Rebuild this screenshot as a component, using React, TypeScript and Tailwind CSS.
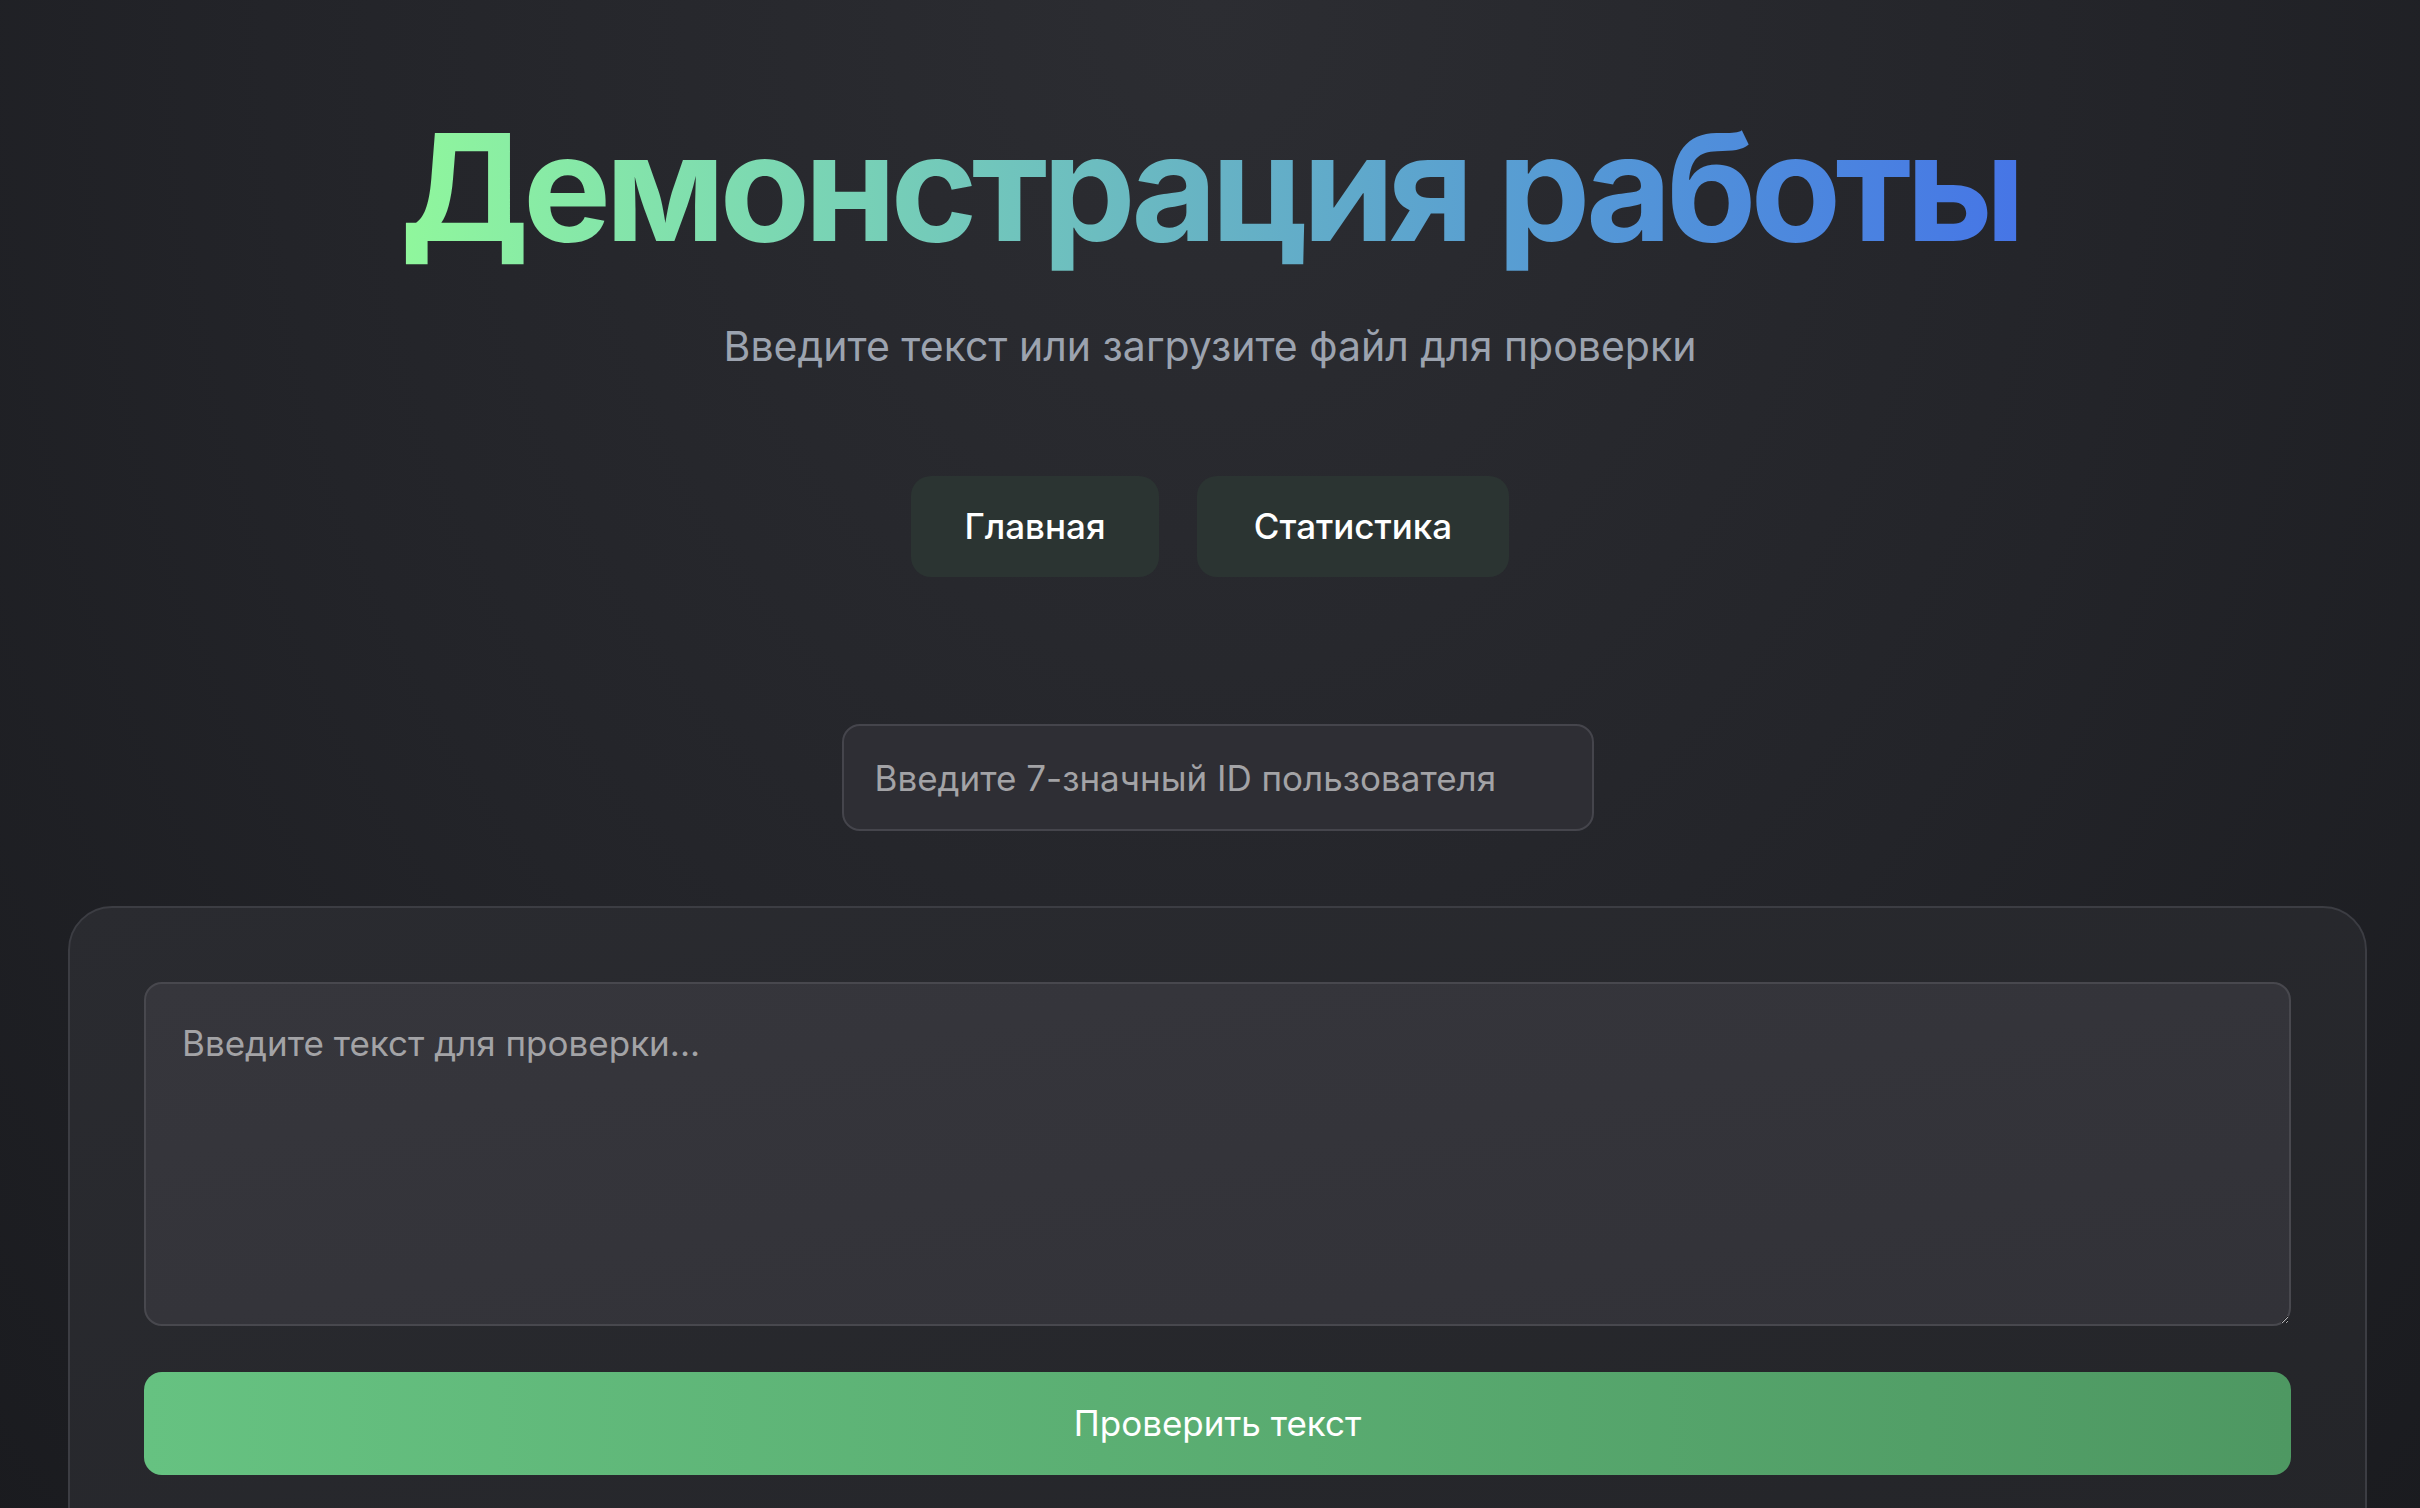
export default function App() {
  return (
    <div className="min-h-screen bg-[radial-gradient(ellipse_at_top,#2c2d32_0%,#232429_55%,#1a1b1f_100%)] font-['Inter',sans-serif] text-white">
      <header className="flex flex-col items-center pt-[114px]">
        <h1 className="bg-gradient-to-r from-[#90f79c] via-[#67b3c4] to-[#4675e6] bg-clip-text pb-[24px] text-[148px] font-bold leading-none tracking-[-0.04em] text-transparent">
          Демонстрация работы
        </h1>
        <p className="mt-[38px] text-[41px] leading-[44px] text-[#9ca3af]">
          Введите текст или загрузите файл для проверки
        </p>
        <nav className="mt-[108px] flex gap-[38px]">
          <button className="h-[101px] w-[248px] rounded-[20px] bg-[#2b3432] text-[35px] font-medium">
            Главная
          </button>
          <button className="h-[101px] w-[312px] rounded-[20px] bg-[#2b3432] text-[35px] font-medium">
            Статистика
          </button>
        </nav>
      </header>

      <main className="ml-[68px] mt-[147px] flex w-[2299px] flex-col items-center">
        <input
          type="text"
          placeholder="Введите 7-значный ID пользователя"
          className="h-[107px] w-[752px] rounded-[18px] border-2 border-[#45454c] bg-[#2e2e34] px-[31px] text-[35px] text-white outline-none placeholder:text-[#a3a3a6]"
        />

        <section className="mt-[75px] w-full rounded-[44px] border-2 border-[#3c3d43] bg-gradient-to-br from-[#2a2b30] to-[#242529] p-[74px]">
          <textarea
            placeholder="Введите текст для проверки..."
            className="block h-[344px] w-full rounded-[18px] border-2 border-[#48484e] bg-gradient-to-br from-[#36363c] to-[#323238] px-[36px] py-[33px] text-[35px] text-white outline-none placeholder:text-[#a3a3a6]"
          />
          <button className="mt-[46px] h-[103px] w-full rounded-[18px] bg-gradient-to-r from-[#66c281] to-[#4e9862] text-[35px] text-white">
            Проверить текст
          </button>
        </section>
      </main>
    </div>
  );
}
